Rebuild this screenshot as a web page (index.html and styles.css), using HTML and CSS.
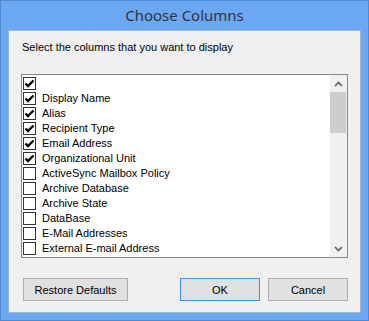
FILE: index.html
```html
<!DOCTYPE html>
<html lang="en">
<head>
    <meta charset="UTF-8">
    <meta name="viewport" content="width=device-width, initial-scale=1.0">
    <title>Choose Columns</title>
    <link rel="stylesheet" href="styles.css">
</head>
<body>
    <div class="window">
        <div class="titlebar">Choose Columns</div>

        <div class="client">
            <div class="prompt">Select the columns that you want to display</div>

            <div class="listbox">
                <div class="items">
                    <div class="item"><span class="check on"><svg viewBox="0 0 11 11"><path d="M1.5 5.5 L4 8 L9.5 2.5"/></svg></span><span></span></div>
                    <div class="item"><span class="check on"><svg viewBox="0 0 11 11"><path d="M1.5 5.5 L4 8 L9.5 2.5"/></svg></span><span>Display Name</span></div>
                    <div class="item"><span class="check on"><svg viewBox="0 0 11 11"><path d="M1.5 5.5 L4 8 L9.5 2.5"/></svg></span><span>Alias</span></div>
                    <div class="item"><span class="check on"><svg viewBox="0 0 11 11"><path d="M1.5 5.5 L4 8 L9.5 2.5"/></svg></span><span>Recipient Type</span></div>
                    <div class="item"><span class="check on"><svg viewBox="0 0 11 11"><path d="M1.5 5.5 L4 8 L9.5 2.5"/></svg></span><span>Email Address</span></div>
                    <div class="item"><span class="check on"><svg viewBox="0 0 11 11"><path d="M1.5 5.5 L4 8 L9.5 2.5"/></svg></span><span>Organizational Unit</span></div>
                    <div class="item"><span class="check"></span><span>ActiveSync Mailbox Policy</span></div>
                    <div class="item"><span class="check"></span><span>Archive Database</span></div>
                    <div class="item"><span class="check"></span><span>Archive State</span></div>
                    <div class="item"><span class="check"></span><span>DataBase</span></div>
                    <div class="item"><span class="check"></span><span>E-Mail Addresses</span></div>
                    <div class="item"><span class="check"></span><span>External E-mail Address</span></div>
                </div>

                <div class="scrollbar">
                    <div class="arrow"><svg viewBox="0 0 9 6"><path d="M1 5 L4.5 1.5 L8 5"/></svg></div>
                    <div class="thumb"></div>
                    <div class="track"></div>
                    <div class="arrow"><svg viewBox="0 0 9 6"><path d="M1 1 L4.5 4.5 L8 1"/></svg></div>
                </div>
            </div>

            <div class="buttons">
                <button class="btn wide">Restore Defaults</button>
                <div class="spacer"></div>
                <button class="btn default">OK</button>
                <button class="btn">Cancel</button>
            </div>
        </div>
    </div>
</body>
</html>
```

FILE: styles.css
```css
* {
    box-sizing: border-box;
}

body {
    margin: 0;
    font-family: "Liberation Sans", Arial, sans-serif;
    font-size: 11px;
    color: #000;
}

.window {
    width: 369px;
    height: 321px;
    background: #6aa9f2;
    border: 1px solid #5289cc;
    padding: 0 7px 7px 7px;
    display: flex;
    flex-direction: column;
}

.titlebar {
    height: 29px;
    text-align: center;
    font-family: "Noto Sans", "Open Sans", sans-serif;
    font-size: 15px;
    line-height: 29px;
    color: #333;
}

.client {
    flex: 1;
    background: #f0f0f0;
    border: 1px solid #9cb6d6;
    padding: 0 12px 0 12px;
    display: flex;
    flex-direction: column;
}

.prompt {
    margin: 10px 0 0 1px;
    height: 33px;
    line-height: 13px;
}

.listbox {
    height: 184px;
    border: 1px solid #828790;
    background: #fff;
    display: flex;
}

.items {
    flex: 1;
    padding: 1px 0 0 1px;
}

.item {
    height: 15px;
    line-height: 15px;
    display: flex;
    align-items: center;
    white-space: nowrap;
}

.check {
    width: 13px;
    height: 13px;
    border: 1px solid #333;
    background: #fff;
    margin-right: 6px;
    display: flex;
    align-items: center;
    justify-content: center;
}

.check svg {
    width: 11px;
    height: 11px;
}

.check svg path {
    fill: none;
    stroke: #000;
    stroke-width: 2.4;
}

.scrollbar {
    width: 17px;
    background: #f0f0f0;
    display: flex;
    flex-direction: column;
}

.arrow {
    height: 17px;
    display: flex;
    align-items: center;
    justify-content: center;
}

.arrow svg {
    width: 9px;
    height: 6px;
}

.arrow svg path {
    fill: none;
    stroke: #606060;
    stroke-width: 1.6;
}

.thumb {
    height: 41px;
    margin: 0 1px 0 0;
    background: #cdcdcd;
}

.track {
    flex: 1;
}

.buttons {
    display: flex;
    gap: 8px;
    margin: 20px 0 0 2px;
}

.spacer {
    flex: 1;
}

.btn {
    width: 80px;
    height: 23px;
    font-family: "Liberation Sans", Arial, sans-serif;
    font-size: 11px;
    color: #000;
    background: #e1e1e1;
    border: 1px solid #adadad;
    padding: 0;
}

.btn.wide {
    width: 105px;
}

.btn.default {
    border-color: #3399ff;
}
```
